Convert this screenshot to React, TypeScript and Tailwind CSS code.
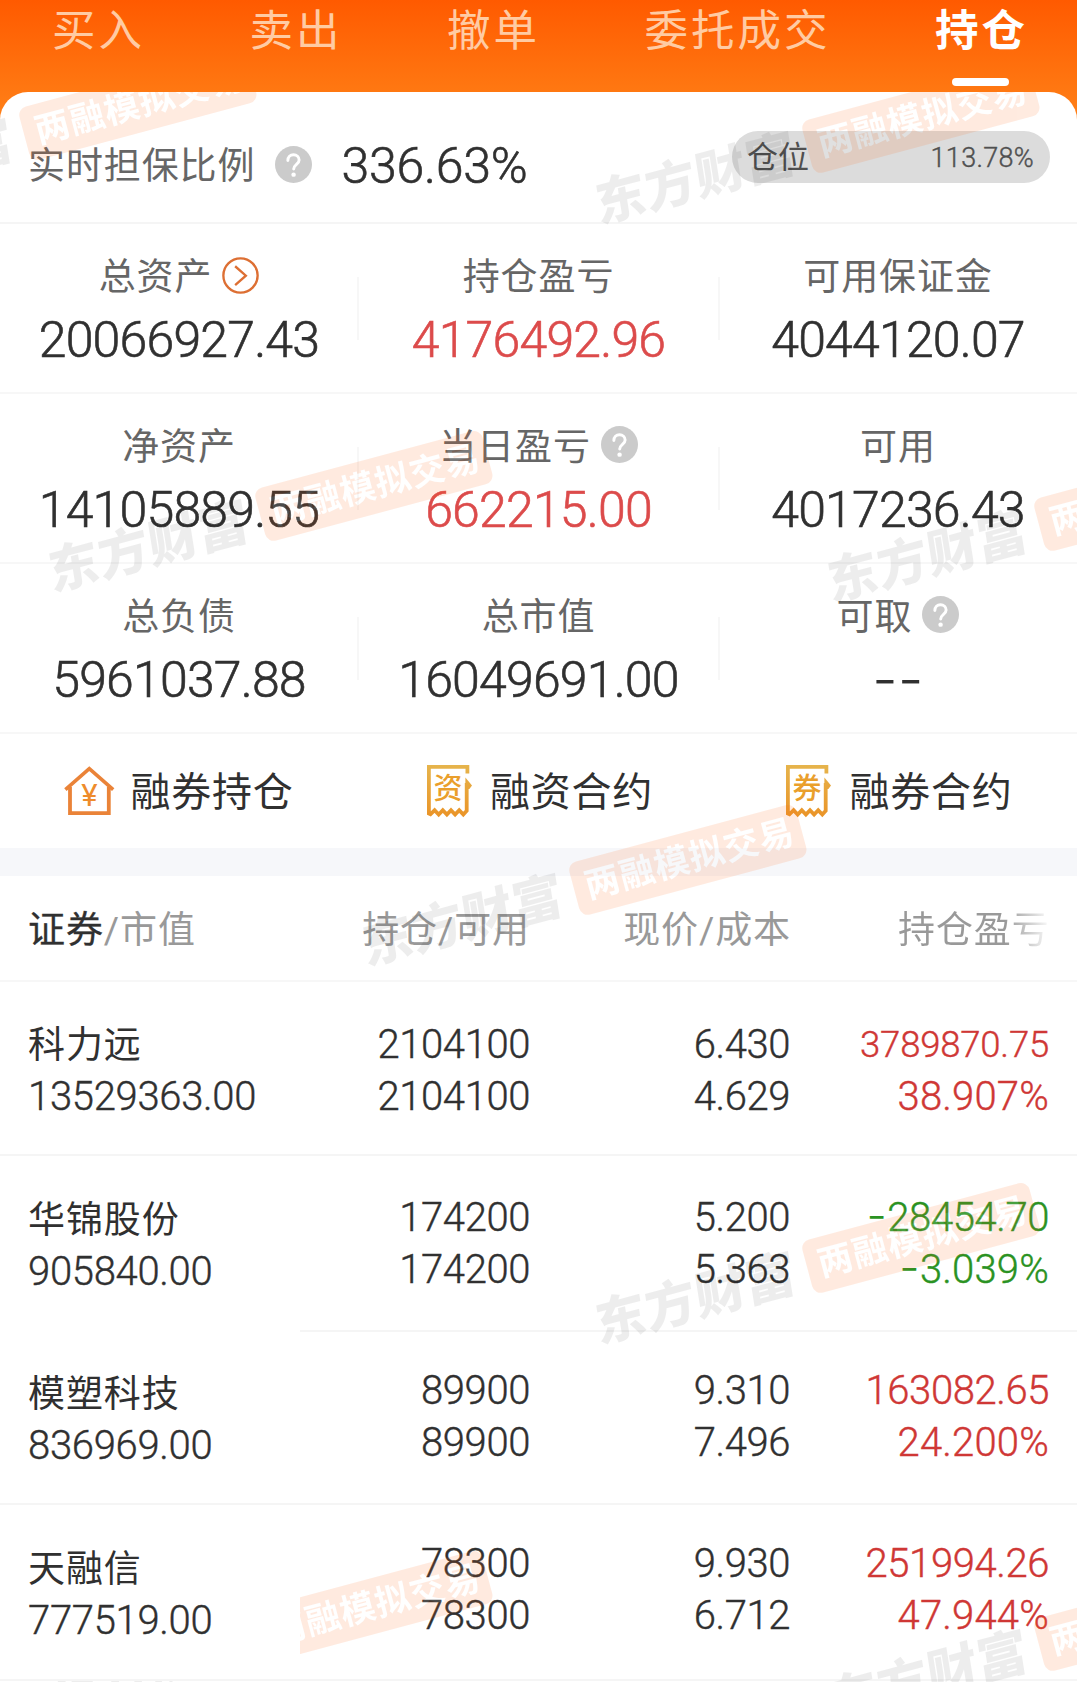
import type { ReactNode } from "react"
import clsx from "clsx"

interface Stat {
  label: string
  value: string
  icon?: "help" | "arrow"
  color?: string
}

interface Holding {
  name: string
  marketValue: string
  amount: string
  available: string
  price: string
  cost: string
  profit: string
  percent: string
  color: string
  profitSize: string
  height: string
  leftPad: string
  rightPad: string
  leftBorder: string
}

const tabs = ["买入", "卖出", "撤单", "委托成交", "持仓"]

const stats: Stat[][] = [
  [
    { label: "总资产", value: "20066927.43", icon: "arrow" },
    { label: "持仓盈亏", value: "4176492.96", color: "text-[#dc4b4b]" },
    { label: "可用保证金", value: "4044120.07" },
  ],
  [
    { label: "净资产", value: "14105889.55" },
    { label: "当日盈亏", value: "662215.00", icon: "help", color: "text-[#dc4b4b]" },
    { label: "可用", value: "4017236.43" },
  ],
  [
    { label: "总负债", value: "5961037.88" },
    { label: "总市值", value: "16049691.00" },
    { label: "可取", value: "--", icon: "help" },
  ],
]

const holdings: Holding[] = [
  {
    name: "科力远",
    marketValue: "13529363.00",
    amount: "2104100",
    available: "2104100",
    price: "6.430",
    cost: "4.629",
    profit: "3789870.75",
    percent: "38.907%",
    color: "text-[#cf3735]",
    profitSize: "text-[36.5px] tracking-[-0.2px]",
    height: "h-[174px]",
    leftPad: "pt-[36px]",
    rightPad: "pt-[37px]",
    leftBorder: "border-[#f5f5f5]",
  },
  {
    name: "华锦股份",
    marketValue: "905840.00",
    amount: "174200",
    available: "174200",
    price: "5.200",
    cost: "5.363",
    profit: "-28454.70",
    percent: "-3.039%",
    color: "text-[#2a9222]",
    profitSize: "text-[40px]",
    height: "h-[176px]",
    leftPad: "pt-[37px]",
    rightPad: "pt-[36px]",
    leftBorder: "border-white",
  },
  {
    name: "模塑科技",
    marketValue: "836969.00",
    amount: "89900",
    available: "89900",
    price: "9.310",
    cost: "7.496",
    profit: "163082.65",
    percent: "24.200%",
    color: "text-[#cf3735]",
    profitSize: "text-[40px]",
    height: "h-[173px]",
    leftPad: "pt-[35px]",
    rightPad: "pt-[33px]",
    leftBorder: "border-[#f5f5f5]",
  },
  {
    name: "天融信",
    marketValue: "777519.00",
    amount: "78300",
    available: "78300",
    price: "9.930",
    cost: "6.712",
    profit: "251994.26",
    percent: "47.944%",
    color: "text-[#cf3735]",
    profitSize: "text-[40px]",
    height: "h-[176px]",
    leftPad: "pt-[37px]",
    rightPad: "pt-[33px]",
    leftBorder: "border-[#f5f5f5]",
  },
]

// centre of every watermark on the page
const marks = [
  { x: 31, y: 133 },
  { x: 814, y: 146 },
  { x: 267, y: 514 },
  { x: 1046, y: 524 },
  { x: 581, y: 888 },
  { x: 814, y: 1266 },
  { x: 267, y: 1634 },
  { x: 1046, y: 1644 },
]

// The minus sign is wider than Roboto's hyphen
function Num({ children }: { children: string }) {
  const dashes = children.match(/^-+/)?.[0] ?? ""
  return (
    <>
      {dashes && (
        <span className="font-['Inter'] text-[1.12em] leading-none tracking-[0.5px] [-webkit-text-stroke:0px]">
          {dashes}
        </span>
      )}
      {children.slice(dashes.length)}
    </>
  )
}

function HelpIcon() {
  return (
    <svg viewBox="0 0 38 38" className="mb-[2px] size-[37px] shrink-0" fill="none">
      <circle cx="19" cy="19" r="19" fill="#cbcbcb" />
      <path
        d="M13.2 15c0-3.6 2.5-6 5.8-6s5.8 2.3 5.8 5.4c0 4.3-5.6 4.6-5.6 9.2"
        stroke="#fff"
        strokeWidth="3"
        strokeLinecap="round"
      />
      <circle cx="19.1" cy="29.4" r="2.3" fill="#fff" />
    </svg>
  )
}

function ArrowIcon() {
  return (
    <svg viewBox="0 0 38 38" className="size-[37px] shrink-0" fill="none" stroke="#dd6f33" strokeWidth="2.4">
      <circle cx="19" cy="19" r="17.6" />
      <path d="M13.5 9.5 24.5 19.2l-11 9.8" />
    </svg>
  )
}

function HouseIcon() {
  return (
    <svg viewBox="0 0 51 50" className="mr-[15px] h-[50px] w-[51px] shrink-0" fill="none">
      <path d="M1.4 23.6 25.3 2.6l23.9 21" stroke="#ea8338" strokeWidth="3.6" />
      <path d="M6 21v26.2h38.8V21" stroke="#ea8338" strokeWidth="3.8" />
      <text x="25.3" y="40" textAnchor="middle" fontSize="31" fontFamily="Roboto" fontWeight="400" fill="#ee8c2c">
        ¥
      </text>
    </svg>
  )
}

function ReceiptIcon({ char }: { char: string }) {
  return (
    <svg viewBox="0 0 45 53" className="mr-[18px] ml-[3px] h-[53px] w-[45px] shrink-0" fill="none">
      <defs>
        <linearGradient id="receipt" gradientUnits="userSpaceOnUse" x1="0" y1="0" x2="0" y2="52">
          <stop offset="0" stopColor="#e6b44c" />
          <stop offset="1" stopColor="#ea9428" />
        </linearGradient>
      </defs>
      <path
        d="M40.4 8.5V1.9H1.9v46.6l1.6.8 4.1-4.1 4.1 4.3 4.1-4.3 4.1 4.3 4.1-4.3 4.1 4.3 4.1-4.3 4.1 4.3 3.4-3.7V18"
        stroke="url(#receipt)"
        strokeWidth="3.8"
      />
      <path d="M38.4 12.5 45 20.6l-2.6 3.4h-4z" fill="url(#receipt)" />
      <text x="21" y="34" textAnchor="middle" fontSize="29" fontWeight="500" fontFamily="Noto Sans CJK SC" fill="#ea9f2c">
        {char}
      </text>
    </svg>
  )
}

function Watermark({ x, y }: { x: number; y: number }) {
  return (
    <div
      className="absolute flex h-[56px] w-[456px] -translate-x-1/2 -translate-y-1/2 -rotate-15 items-center justify-between whitespace-nowrap"
      style={{ left: x, top: y }}
    >
      <span className="-skew-x-6 pt-[3px] pl-[2px] text-[51px] leading-[56px] font-black tracking-[0.6px] text-black/[0.07]">
        东方财富
      </span>
      <span className="flex h-[55px] w-[235px] items-center justify-center rounded-[9px] bg-[#ff6414] pt-[3px] pl-[4px] text-[35px] font-bold tracking-[1px] text-white opacity-[0.13]">
        两融模拟交易
      </span>
    </div>
  )
}

function Pair({ top, bottom, className, topSize }: { top: string; bottom: string; className: string; topSize?: string }) {
  return (
    <div
      className={clsx(
        "flex flex-col text-right text-[40px] leading-[52px] tracking-[-0.4px] [-webkit-text-stroke:0.4px]",
        className,
      )}
    >
      <span className={topSize}>
        <Num>{top}</Num>
      </span>
      <span className={clsx(bottom.endsWith("%") && "tracking-[0.2px]")}>
        <Num>{bottom}</Num>
      </span>
    </div>
  )
}

function Action({ icon, label }: { icon: ReactNode; label: string }) {
  return (
    <div className="flex items-center justify-center">
      {icon}
      <span className="pt-[4px] text-[40px] leading-[52px] tracking-[0.8px] text-[#303030]">{label}</span>
    </div>
  )
}

export default function App() {
  return (
    <div
      lang="zh-CN"
      className="relative h-[1682px] w-[1077px] overflow-hidden bg-[linear-gradient(to_bottom,#ff5a00_0px,#ff7812_92px,#ff8119_120px)] font-['Roboto','Noto_Sans_CJK_SC',sans-serif] font-light text-[#303030]"
    >
      <nav className="flex h-[92px] justify-between pt-[2px] pr-[49px] pl-[52px]">
        {tabs.map((tab) => (
          <div
            key={tab}
            className={clsx(
              "flex flex-col items-center text-[43.5px] leading-[60px] tracking-[3px]",
              tab === "持仓" ? "font-bold text-white" : "font-normal text-[#ffcba3]",
            )}
          >
            {tab}
            {tab === "持仓" && <span className="mt-[16px] mr-[3px] h-[8px] w-[57px] rounded-full bg-white" />}
          </div>
        ))}
      </nav>

      <main className="h-[1590px] rounded-t-[28px] bg-white">
        <section className="flex h-[132px] items-center border-b-2 border-[#f5f5f5] pr-[27px] pl-[28px]">
          <div className="flex flex-1 items-center pt-[16px]">
            <span className="pt-[4px] text-[37px] leading-[52px] font-normal tracking-[0.9px] text-[#666]">
              实时担保比例
            </span>
            <span className="mr-[29px] ml-[20px]">
              <HelpIcon />
            </span>
            <span className="pt-[2px] text-[50px] leading-[56px] tracking-[-0.2px] [-webkit-text-stroke:0.6px]">
              336.63%
            </span>
          </div>
          <div className="flex h-[52px] w-[318px] items-center justify-between rounded-full bg-[#dcdcdc] pr-[16px] pl-[15px] text-[#505050]">
            <span className="pt-[3px] text-[31px] font-normal">仓位</span>
            <span className="pt-[2px] text-[27px] tracking-[0.3px] [-webkit-text-stroke:0.4px]">113.78%</span>
          </div>
        </section>

        {stats.map((row, i) => (
          <section key={i} className="grid h-[170px] grid-cols-[358px_361px_358px] border-b-2 border-[#f7f7f7]">
            {row.map((stat, j) => (
              <div key={stat.label} className="relative flex flex-col items-center pt-[25px]">
                <div className="flex h-[52px] items-center gap-[10px]">
                  <span className="pt-[5px] text-[37px] leading-[52px] font-normal tracking-[0.9px] text-[#666]">
                    {stat.label}
                  </span>
                  {stat.icon === "help" && <HelpIcon />}
                  {stat.icon === "arrow" && <ArrowIcon />}
                </div>
                <span
                  className={clsx(
                    "mt-[10px] text-[50px] leading-[58px] tracking-[-0.8px] [-webkit-text-stroke:0.6px]",
                    stat.color,
                  )}
                >
                  <Num>{stat.value}</Num>
                </span>
                {j < 2 && <span className="absolute top-[53px] right-[-1px] h-[63px] w-[2px] bg-[#f7f7f7]" />}
              </div>
            ))}
          </section>
        ))}

        <section className="grid h-[114px] grid-cols-[358px_361px_358px] font-normal">
          <Action icon={<HouseIcon />} label="融券持仓" />
          <Action icon={<ReceiptIcon char="资" />} label="融资合约" />
          <Action icon={<ReceiptIcon char="券" />} label="融券合约" />
        </section>
        <div className="h-[28px] bg-[#f6f7fa]" />

        <section>
          <div className="flex h-[106px] items-center border-b-2 border-[#f7f7f7] pt-[6px] pl-[28px] text-[37px] leading-[52px] font-normal tracking-[0.9px] text-[#999]">
            <div className="w-[272px]">
              <span className="text-[#303030] [-webkit-text-stroke:0.3px]">证券</span>/市值
            </div>
            <div className="w-[230px] text-right">持仓/可用</div>
            <div className="w-[261px] text-right">现价/成本</div>
            <div className="ml-[107px] w-[153px] overflow-hidden bg-linear-to-r from-[#999] from-70% to-white bg-clip-text whitespace-nowrap text-transparent">
              持仓盈亏
            </div>
          </div>

          {holdings.map((h) => (
            <div key={h.name} className={clsx("flex", h.height)}>
              <div className={clsx("relative z-10 w-[300px] border-b-2 bg-white pl-[28px]", h.leftPad, h.leftBorder)}>
                <div className="pt-[2px] text-[37px] leading-[52px] font-normal tracking-[0.9px]">{h.name}</div>
                <div className="text-[40px] leading-[50px] tracking-[-0.3px] [-webkit-text-stroke:0.4px]">
                  {h.marketValue}
                </div>
              </div>
              <div className={clsx("flex flex-1 border-b-2 border-[#f5f5f5]", h.rightPad)}>
                <Pair className="w-[230px]" top={h.amount} bottom={h.available} />
                <Pair className="w-[260px]" top={h.price} bottom={h.cost} />
                <Pair className={clsx("w-[259px]", h.color)} top={h.profit} bottom={h.percent} topSize={h.profitSize} />
              </div>
            </div>
          ))}
        </section>
      </main>

      <div className="pointer-events-none absolute inset-0 [clip-path:inset(92px_0_0_0_round_28px_28px_0_0)]">
        {marks.map((mark) => (
          <Watermark key={`${mark.x}-${mark.y}`} {...mark} />
        ))}
      </div>
    </div>
  )
}
